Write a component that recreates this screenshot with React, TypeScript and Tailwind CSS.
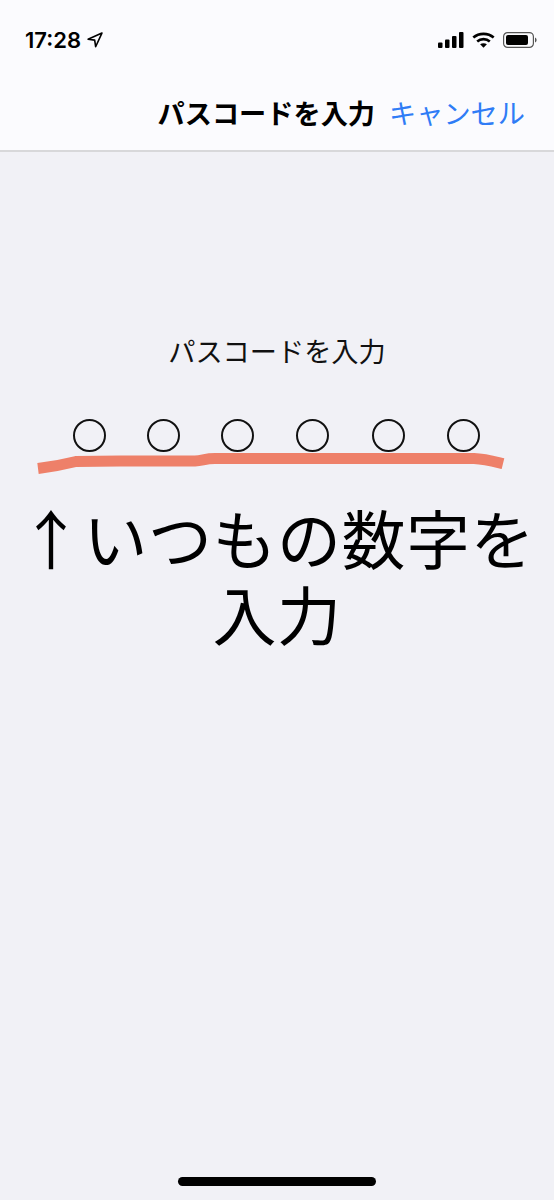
const cjk = "font-['Noto_Sans_CJK_JP','Noto_Sans',sans-serif]";

const dotGaps = ["ml-0", "ml-[41px]", "ml-[41px]", "ml-[42px]", "ml-[43px]", "ml-[42px]"];

function StatusIcons() {
  return (
    <div className="flex items-center gap-[8px]">
      <svg width="26" height="16" viewBox="0 0 26 16" fill="#000" aria-hidden="true">
        <rect x="0" y="10.5" width="4.5" height="5.5" rx="1" />
        <rect x="7" y="7.5" width="4.5" height="8.5" rx="1" />
        <rect x="14" y="4" width="4.5" height="12" rx="1" />
        <rect x="21" y="0" width="4.5" height="16" rx="1" />
      </svg>
      <svg width="23" height="16" viewBox="0 0 23 16" fill="none" stroke="#000" strokeWidth="2.6" aria-hidden="true">
        <path d="M1.3 5.6C7 .6 16 .6 21.7 5.6" />
        <path d="M5.2 9.4c3.5-3 9.1-3 12.6 0" />
        <path d="M11.5 15.8l-3.4-3.5c2-1.4 4.8-1.4 6.8 0z" fill="#000" stroke="none" />
      </svg>
      <svg width="34" height="16" viewBox="0 0 34 16" fill="none" aria-hidden="true">
        <rect x="0.6" y="0.6" width="29.8" height="14.8" rx="4" stroke="#555" strokeWidth="1.2" />
        <rect x="3" y="3" width="22" height="10" rx="2" fill="#000" />
        <path d="M32 5.5c1 .4 1.6 1.4 1.6 2.5s-.6 2.1-1.6 2.5z" fill="#555" />
      </svg>
    </div>
  );
}

export default function App() {
  return (
    <div className={`relative flex h-[1200px] w-[554px] flex-col overflow-hidden bg-[#f1f1f6] text-black ${cjk}`}>
      <header className="h-[152px] border-b-2 border-[#d8d8da] bg-[#fbfbfe]">
        <div className="flex items-center justify-between pl-[25px] pr-[17px] pt-[30px]">
          <div className="flex items-center gap-[6px]">
            <span className="font-['Inter',sans-serif] text-[22px] font-semibold leading-[20px]">17:28</span>
            <svg width="16" height="16" viewBox="0 0 15 15" fill="none" stroke="#000" strokeWidth="1.5" strokeLinejoin="round" aria-hidden="true">
              <path d="M14 1L1 6.8l6.2.8.9 6.2z" />
            </svg>
          </div>
          <StatusIcons />
        </div>
        <div className="mt-[42px] flex items-center justify-end pr-[29px]">
          <span className="text-[27.2px] font-bold leading-[40px]">パスコードを入力</span>
          <span className="ml-[14px] text-[27.2px] leading-[40px] text-[#2f7cf6]">キャンセル</span>
        </div>
      </header>

      <main className="flex flex-col items-center">
        <p className="mt-[178px] text-[27.2px] leading-[40px] text-[#111]">パスコードを入力</p>
        <div className="mt-[49px] flex pr-[2px]">
          {dotGaps.map((gap, i) => (
            <span key={i} className={`size-[33px] rounded-full border-[2px] border-[#111] ${gap}`} />
          ))}
        </div>
        <p className="mt-[46px] w-full text-center text-[64px] leading-[76px] tracking-[0.5px]">
          ↑いつもの数字を
          <br />
          入力
        </p>
      </main>

      {/* marker stroke drawn over the screenshot */}
      <svg className="absolute left-0 top-0" width="554" height="1200" fill="none" aria-hidden="true">
        <path
          d="M38 468.5C50 467 60 465.5 76 461.5L120 461H195C203 460.5 205 458.5 215 458.5H474C485 459 492 461 503 463.7"
          stroke="#ee8069"
          strokeWidth="11"
        />
      </svg>

      <div className="absolute bottom-[14px] left-[178px] h-[9px] w-[198px] rounded-full bg-black" />
    </div>
  );
}
